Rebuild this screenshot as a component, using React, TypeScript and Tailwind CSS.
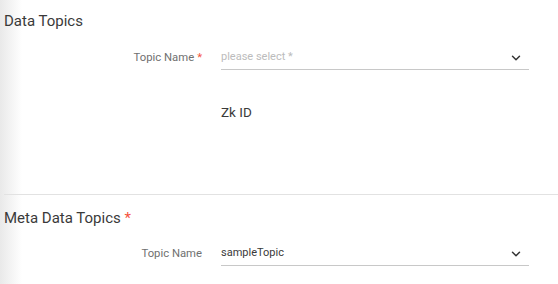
import React from 'react';
import { ChevronDown } from 'lucide-react';

const FONT = "font-['Roboto','Liberation_Sans',sans-serif]";

const SelectRow = ({ label, required, value, placeholder }: { label: string; required?: boolean; value?: string; placeholder?: string }) => (
  <div className="flex items-center">
    <div className="w-[199px] shrink-0 pr-[1px] text-right text-[11.3px] text-[#707070]">
      {label}
      {required && <span className="ml-[3px] text-[#f5533d]">*</span>}
    </div>
    <div className="ml-[18px] flex h-[24px] w-[308px] items-center justify-between border-b border-[#c8c8c8]">
      {value ? (
        <span className="text-[11px] text-[#3a3a3a]">{value}</span>
      ) : (
        <span className="text-[11px] text-[#bcbcbc]">{placeholder}</span>
      )}
      <ChevronDown size={14} strokeWidth={2.5} className="mr-[6px] text-[#333]" />
    </div>
  </div>
);

export default function App() {
  return (
    <div className={`${FONT} h-[284px] w-[558px] overflow-hidden bg-[linear-gradient(to_right,#e9e9e9,#ffffff_22px)]`}>
      {/* Data Topics */}
      <div className="h-[194px] pl-[4px] pt-[10px]">
        <h2 className="text-[15px] leading-[22px] text-[#3a3a3a]">Data Topics</h2>
        <div className="mt-[14px]">
          <SelectRow label="Topic Name" required placeholder="please select *" />
        </div>
        <div className="ml-[217px] mt-[32px] text-[13.5px] leading-[20px] text-[#3a3a3a]">Zk ID</div>
      </div>

      <div className="ml-[4px] border-t border-[#e2e2e2]" />

      {/* Meta Data Topics */}
      <div className="pl-[4px] pt-[12px]">
        <h2 className="text-[15px] leading-[22px] text-[#3a3a3a]">
          Meta Data Topics <span className="text-[#f5533d]">*</span>
        </h2>
        <div className="mt-[13px]">
          <SelectRow label="Topic Name" value="sampleTopic" />
        </div>
      </div>
    </div>
  );
}
